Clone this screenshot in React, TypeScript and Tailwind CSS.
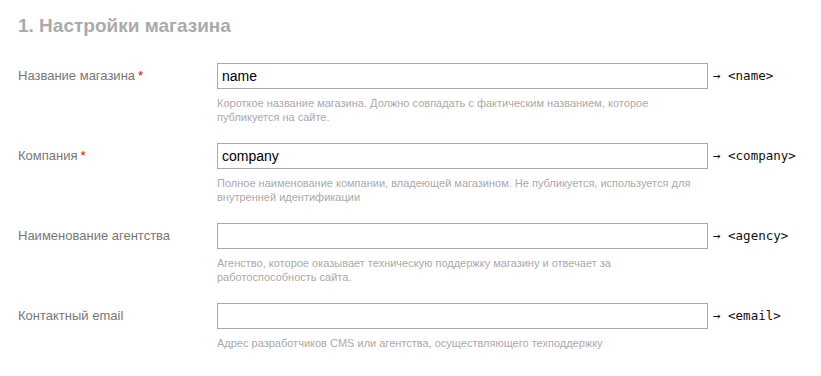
const fields = [
  {
    label: "Название магазина",
    required: true,
    value: "name",
    tag: "name",
    hint: "Короткое название магазина. Должно совпадать с фактическим названием, которое публикуется на сайте.",
  },
  {
    label: "Компания",
    required: true,
    value: "company",
    tag: "company",
    hint: "Полное наименование компании, владеющей магазином. Не публикуется, используется для внутренней идентификации",
  },
  {
    label: "Наименование агентства",
    required: false,
    value: "",
    tag: "agency",
    hint: "Агенство, которое оказывает техническую поддержку магазину и отвечает за работоспособность сайта.",
  },
  {
    label: "Контактный email",
    required: false,
    value: "",
    tag: "email",
    hint: "Адрес разработчиков CMS или агентства, осуществляющего техподдержку",
  },
];

export default function App() {
  return (
    <div className="min-h-[376px] bg-white px-[18px] pt-[14px] font-['Liberation_Sans',Arial,sans-serif]">
      <h2 className="text-[19px] leading-6 font-bold text-[#aaaaaa]">1. Настройки магазина</h2>

      <div className="mt-[25px] flex flex-col gap-[19px]">
        {fields.map((f) => (
          <div key={f.tag} className="flex items-start">
            <label className="w-[199px] shrink-0 text-[13px] leading-[26px] text-[#777777]">
              {f.label}
              {f.required && <span className="ml-[3px] text-[#ee0000]">*</span>}
            </label>
            <div className="w-[491px] shrink-0">
              <input
                defaultValue={f.value}
                className="block h-[26px] w-full border border-[#aaaaaa] bg-white px-[4px] text-[14px] text-black outline-none"
              />
              <p className="mt-[7px] text-[11px] leading-[14px] text-[#aaaaaa]">{f.hint}</p>
            </div>
            <div className="ml-[5px] flex h-[26px] items-center whitespace-pre font-['DejaVu_Sans_Mono',monospace] text-[12.5px] text-[#111111]">
              {"→ <" + f.tag + ">"}
            </div>
          </div>
        ))}
      </div>
    </div>
  );
}
